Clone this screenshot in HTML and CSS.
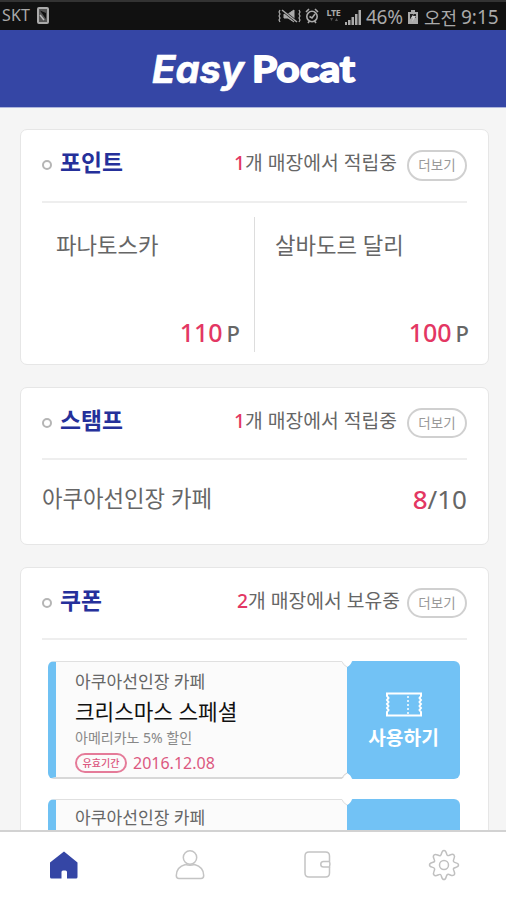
FILE: index.html
```html
<!DOCTYPE html>
<html lang="ko">
<head>
<meta charset="utf-8">
<title>Easy Pocat</title>
<link rel="stylesheet" href="styles.css">
</head>
<body>
<div class="app">
  <div class="status">
    <span class="carrier">SKT</span>
    <svg class="sim" width="12" height="17" viewBox="0 0 12 17"><rect x="1" y="1" width="10" height="15" rx="1" fill="#555" stroke="#aaa" stroke-width="2"/><path d="M3 3.500L9 12V6z" fill="#111"/><path d="M3 8l4 5" stroke="#bbb" stroke-width="1.500" fill="none"/></svg>
    <div class="status-right">
      <svg class="mute" width="23" height="16" viewBox="0 0 23 16" fill="none" stroke="#aaa"><path d="M2 2l-1 2 1 2-1 2 1 2-1 2 1 2M21 2l1 2-1 2 1 2-1 2 1 2-1 2" stroke-width="1.2"/><path d="M6 6h4l6-4v12l-6-4H6z" fill="#aaa"/><path d="M4 2l15 12" stroke="#111" stroke-width="2.500"/><path d="M4 2l15 12" stroke-width="1.5"/></svg>
      <svg class="alarm" width="14" height="16" viewBox="0 0 14 16" fill="none" stroke="#aaa" stroke-width="1.600"><circle cx="7" cy="8.5" r="5.2"/><path d="M1 4l3-3M13 4l-3-3M3 15l1.500-2M11 15l-1.500-2M4.500 8.500L7 10l3-4"/></svg>
      <span class="lte"><b>LTE</b><svg width="10" height="4" viewBox="0 0 10 4"><path d="M1 0h3L2.500 3zM6 3h3L7.500 0z" fill="#555"/></svg></span>
      <svg class="signal" width="16" height="15" viewBox="0 0 16 15" fill="#aaa"><path d="M0 12h2v3H0zM3 10h2.500v5H3zM6.500 7H9v8H6.500zM10 4h2.500v11H10zM13.500 0H16v15h-2.500z"/></svg>
      <span class="pct">46%</span>
      <svg class="battery" width="10" height="14" viewBox="0 0 10 14"><path d="M3 0h4v2h3v12H0V2h3z" fill="#aaa"/><path d="M2 4h6v4L5 6 2 9z" fill="#222"/><path d="M6 3L3 8h2l-1 4 4-6H5z" fill="#ccc"/></svg>
      <span class="ampm">오전</span>
      <span class="clock">9:15</span>
    </div>
  </div>

  <header class="brand">
    <svg width="208" height="58" viewBox="0 0 208 58"><text class="easy" x="1" y="35" textLength="92" lengthAdjust="spacingAndGlyphs">Easy</text><text class="pocat" x="101" y="34" textLength="103" lengthAdjust="spacingAndGlyphs">Pocat</text></svg>
  </header>

  <main class="content">
    <section class="card points">
      <div class="card-head">
        <i class="dot"></i><h2>포인트</h2>
        <p class="summary"><b>1</b>개 매장에서 적립중</p>
        <span class="more">더보기</span>
      </div>
      <div class="point-grid">
        <div class="point"><span class="shop">파나토스카</span><p class="amount"><b>110</b><span>P</span></p></div>
        <div class="point second"><span class="shop">살바도르 달리</span><p class="amount"><b>100</b><span>P</span></p></div>
      </div>
    </section>

    <section class="card stamps">
      <div class="card-head">
        <i class="dot"></i><h2>스탬프</h2>
        <p class="summary"><b>1</b>개 매장에서 적립중</p>
        <span class="more">더보기</span>
      </div>
      <div class="stamp-row"><span class="shop">아쿠아선인장 카페</span><p class="count"><b>8</b>/10</p></div>
    </section>

    <section class="card coupons">
      <div class="card-head">
        <i class="dot"></i><h2>쿠폰</h2>
        <p class="summary two"><b>2</b>개 매장에서 보유중</p>
        <span class="more">더보기</span>
      </div>
      <div class="tickets">
        <article class="ticket">
          <div class="info">
            <p class="store">아쿠아선인장 카페</p>
            <p class="name">크리스마스 스페셜</p>
            <p class="desc">아메리카노 5% 할인</p>
            <p class="valid"><span class="tag">유효기간</span><span class="date">2016.12.08</span></p>
          </div>
          <div class="use">
            <svg width="38" height="25" viewBox="0 0 38 25" fill="none" stroke="#fff" stroke-width="2"><path d="M2 1.500H36V4L34.500 6 36 8 34.500 10 36 12 34.500 14 36 16 34.500 18 36 20 V23.500H2V20L3.500 18 2 16 3.500 14 2 12 3.500 10 2 8 3.500 6 2 4z"/><path d="M23 4v18" stroke-width="1.500" stroke-dasharray="2 2"/></svg>
            <span>사용하기</span>
          </div>
          <svg class="notch top" width="10" height="7" viewBox="0 0 10 7"><path d="M0 0H10Q9 4 5 6Q4 2 0 1z" fill="#fff"/><path d="M0 .5Q1 4 5 6" fill="none" stroke="#dedede"/></svg>
          <svg class="notch bottom" width="10" height="7" viewBox="0 0 10 7"><path d="M0 7H10Q9 3 5 1Q4 5 0 6z" fill="#fff"/><path d="M0 6.500Q1 3 5 1" fill="none" stroke="#d0d0d0"/></svg>
        </article>
        <article class="ticket">
          <div class="info"><p class="store">아쿠아선인장 카페</p></div>
          <div class="use"></div>
          <svg class="notch top" width="10" height="7" viewBox="0 0 10 7"><path d="M0 0H10Q9 4 5 6Q4 2 0 1z" fill="#fff"/><path d="M0 .5Q1 4 5 6" fill="none" stroke="#dedede"/></svg>
        </article>
      </div>
    </section>
  </main>

  <nav class="tabs">
    <span><svg width="30" height="30" viewBox="0 0 30 30"><path d="M15 1.500L28.500 12.500V27Q28.500 28.500 27 28.500H18V22Q18 20.500 16.500 20.500H14Q12.500 20.500 12.500 22V28.500H2.500Q1 28.500 1 27V12.500z" fill="#3546a5"/></svg></span>
    <span><svg width="30" height="30" viewBox="0 0 30 30" fill="none" stroke="#c4c4c4" stroke-width="1.500"><circle cx="15" cy="7.500" r="6.700"/><path d="M10.500 14.500C5 16 1.300 20 1.300 25.500Q1.300 28.500 4 28.500H26Q28.700 28.500 28.700 25.500C28.700 20 25 16 19.500 14.500Q15 16 10.500 14.500"/></svg></span>
    <span><svg width="30" height="30" viewBox="0 0 30 30" fill="none" stroke="#c4c4c4" stroke-width="1.500"><path d="M26.500 11V6Q26.500 2 22.500 2H6Q2 2 2 6V23Q2 27 6 27H22.500Q26.500 27 26.500 23V17"/><path d="M26.500 11.500H20.500a2.750 2.750 0 0 0 0 5.500H26.500Q27.500 14.250 26.500 11.500z"/></svg></span>
    <span><svg width="32" height="32" viewBox="0 0 32 32" fill="none" stroke="#c0c0c0" stroke-width="1.500" stroke-linejoin="round"><path d="M12.500 6.500C14 5.500 13.200 1.500 16 1.500S18 5.500 19.500 6.500 24 3.700 26 6 24.500 10.500 25.500 12.500 30.500 13.200 30.500 16 26.500 18 25.500 19.500 28.300 24 26 26 21.500 24.500 19.500 25.500 18.800 30.500 16 30.500 14 26.500 12.500 25.500 8 28.300 6 26 7.500 21.500 6.500 19.500 1.500 18.800 1.500 16 5.500 14 6.500 12.500 3.700 8 6 6 10.500 7.500 12.500 6.500z"/><circle cx="16" cy="16" r="4.500"/></svg></span>
  </nav>
</div>
</body>
</html>
```
FILE: styles.css
```css
* { box-sizing: border-box; }
body { margin: 0; font-family: "Noto Sans", "Noto Sans CJK KR", sans-serif; color: #666; }
h2, p { margin: 0; }
b { font-weight: 500; }
svg { display: block; flex: none; }
.app { width: 506px; height: 900px; display: flex; flex-direction: column; overflow: hidden; background: #f5f5f5; white-space: nowrap; }

.status { height: 30px; flex: none; display: flex; align-items: center; padding: 2px 7px 0 2px; background: #111; border-top: 2px solid #333; color: #aaa; }
.carrier { font-size: 16px; letter-spacing: .2px; width: 35px; position: relative; top: -2px; }
.status-right { margin-left: auto; display: flex; align-items: center; }
.sim { margin-top: -3px; }
.mute, .alarm { margin-top: -2px; }
.alarm { margin-left: 4px; }
.lte { width: 17px; margin: -5px 0 0 6px; display: flex; flex-direction: column; align-items: center; }
.lte b { font-size: 9px; line-height: 10px; font-weight: 700; letter-spacing: -.3px; }
.signal { margin-left: 3px; }
.pct { font-size: 19px; width: 38px; margin-left: 5px; letter-spacing: -.3px; }
.battery { margin-left: 4px; }
.ampm { font-size: 18px; width: 33px; margin-left: 6px; }
.clock { font-size: 19px; width: 38px; margin-left: 4px; }

.brand { height: 78px; flex: none; background: #3546a5; border-bottom: 1px solid #aeb5dc; padding: 18px 0 0 151px; }
.brand text { fill: #fff; font-weight: 700; }
.brand svg { overflow: visible; }
.easy { font-family: Inter, sans-serif; font-style: italic; font-size: 38px; stroke: #fff; stroke-width: .6; stroke-linejoin: round; }
.pocat { font-family: Lato, sans-serif; font-size: 37px; stroke: #fff; stroke-width: 1.800; stroke-linejoin: round; }

.content { flex: 1; min-height: 0; overflow: hidden; padding: 21px 17px 0 20px; display: flex; flex-direction: column; gap: 22px; }
.card { flex: none; background: #fff; border: 1px solid #e6e6e6; border-radius: 7px; padding: 0 21px; }
.points { height: 236px; }
.stamps { height: 158px; }
.coupons { height: 420px; }
.card-head { height: 73px; display: flex; align-items: flex-start; border-bottom: 2px solid #eee; }
.stamps .card-head, .coupons .card-head { height: 72px; }
.dot { width: 10px; height: 10px; border: 2px solid #b5b5b5; border-radius: 50%; margin: 30px 8px 0 0; }
h2 { font-size: 22.800px; line-height: 34px; margin-top: 16px; color: #25309a; font-weight: 700; }
.summary { margin: 16px 10px 0 auto; font-size: 19.300px; line-height: 34px; }
.summary.two { margin-right: 7px; }
.summary b, .amount b, .count b { color: #e33763; }
.more { width: 60px; height: 31px; margin-top: 20px; border: 2px solid #d0d0d0; border-radius: 16px; color: #999; font-size: 13.500px; line-height: 27px; text-align: center; }
.stamps .more, .coupons .more { height: 30px; line-height: 26px; }
.shop { font-size: 22.300px; line-height: 32px; }
.point .shop { margin-left: 1px; }
.second .shop { margin-left: 0; }
.point-grid { display: grid; grid-template-columns: 213px 1fr; padding-top: 14px; height: 150px; }
.point { display: flex; flex-direction: column; padding: 13px 14px 0 13px; border-right: 1px solid #ddd; height: 135px; }
.point.second { border: 0; padding: 13px 0 0 20px; }
.amount { margin-top: 54px; display: flex; justify-content: flex-end; align-items: baseline; gap: 4px; font-size: 25px; line-height: 32px; }
.amount span { font-size: 22px; font-weight: 500; }
.point.second .amount { margin-right: -2px; }
.stamp-row { display: flex; justify-content: space-between; align-items: center; height: 78px; }
.count { font-size: 26px; line-height: 32px; }

.tickets { padding: 21px 7px 0 6px; display: flex; flex-direction: column; gap: 20px; }
.ticket { position: relative; display: flex; height: 118px; }
.info { width: 299px; border: 1px solid #e0e0e0; border-bottom: 2px solid #d8d8d8; border-left: 8px solid #6fc1f3; border-right: 0; border-radius: 6px 0 0 6px; background: #fbfbfb; padding: 7px 0 0 19px; }
.ticket + .ticket .info { padding-top: 5px; }
.store { font-size: 17.100px; line-height: 25px; }
.name { font-size: 21.300px; line-height: 36px; color: #111; }
.desc { font-size: 14px; line-height: 16px; color: #888; }
.valid { display: flex; align-items: center; margin-top: 4px; gap: 6px; height: 26px; color: #dc5880; }
.tag { width: 52px; height: 20px; border: 2px solid #e57b99; border-radius: 10px; font-size: 10px; line-height: 16px; text-align: center; font-weight: 500; }
.date { font-size: 16px; }
.use { width: 113px; background: #72c2f5; border-radius: 6px; display: flex; flex-direction: column; align-items: center; padding-top: 31px; color: #fff; }
.use span { font-size: 19.200px; line-height: 28px; font-weight: 700; margin-top: 7px; }
.notch { position: absolute; left: 294px; }
.notch.top { top: 0; }
.notch.bottom { bottom: 0; }

.tabs { flex: none; height: 70px; background: #fff; border-top: 2px solid #d2d2d2; display: grid; grid-template-columns: repeat(4, 1fr); }
.tabs span { display: flex; justify-content: center; align-items: flex-start; padding: 18px 0 0 1px; }
.tabs span:nth-child(3) { padding-left: 4px; }
.tabs span:last-child { padding: 17px 0 0 2px; }
```
